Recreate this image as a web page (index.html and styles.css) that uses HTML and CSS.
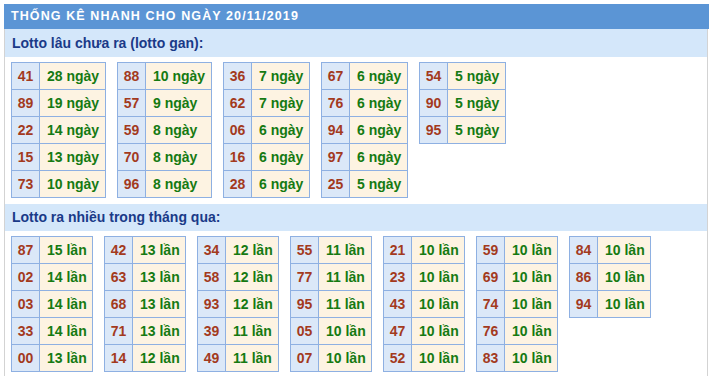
FILE: index.html
```html
<!DOCTYPE html>
<html>
<head>
<meta charset="utf-8">
<link rel="stylesheet" href="styles.css">
</head>
<body>
<div class="box">
  <div class="title">THỐNG KÊ NHANH CHO NGÀY 20/11/2019</div>
  <div class="body">
    <div class="sub first">Lotto lâu chưa ra (lotto gan):</div>
    <div class="tables">
      <table class="g2"><tr><td class="n">41</td><td class="t">28 ngày</td></tr><tr><td class="n">89</td><td class="t">19 ngày</td></tr><tr><td class="n">22</td><td class="t">14 ngày</td></tr><tr><td class="n">15</td><td class="t">13 ngày</td></tr><tr><td class="n">73</td><td class="t">10 ngày</td></tr></table>
      <table class="g2"><tr><td class="n">88</td><td class="t">10 ngày</td></tr><tr><td class="n">57</td><td class="t">9 ngày</td></tr><tr><td class="n">59</td><td class="t">8 ngày</td></tr><tr><td class="n">70</td><td class="t">8 ngày</td></tr><tr><td class="n">96</td><td class="t">8 ngày</td></tr></table>
      <table class="g1"><tr><td class="n">36</td><td class="t">7 ngày</td></tr><tr><td class="n">62</td><td class="t">7 ngày</td></tr><tr><td class="n">06</td><td class="t">6 ngày</td></tr><tr><td class="n">16</td><td class="t">6 ngày</td></tr><tr><td class="n">28</td><td class="t">6 ngày</td></tr></table>
      <table class="g1"><tr><td class="n">67</td><td class="t">6 ngày</td></tr><tr><td class="n">76</td><td class="t">6 ngày</td></tr><tr><td class="n">94</td><td class="t">6 ngày</td></tr><tr><td class="n">97</td><td class="t">6 ngày</td></tr><tr><td class="n">25</td><td class="t">5 ngày</td></tr></table>
      <table class="g1"><tr><td class="n">54</td><td class="t">5 ngày</td></tr><tr><td class="n">90</td><td class="t">5 ngày</td></tr><tr><td class="n">95</td><td class="t">5 ngày</td></tr></table>
    </div>
    <div class="sub">Lotto ra nhiều trong tháng qua:</div>
    <div class="tables">
      <table class="l"><tr><td class="n">87</td><td class="t">15 lần</td></tr><tr><td class="n">02</td><td class="t">14 lần</td></tr><tr><td class="n">03</td><td class="t">14 lần</td></tr><tr><td class="n">33</td><td class="t">14 lần</td></tr><tr><td class="n">00</td><td class="t">13 lần</td></tr></table>
      <table class="l"><tr><td class="n">42</td><td class="t">13 lần</td></tr><tr><td class="n">63</td><td class="t">13 lần</td></tr><tr><td class="n">68</td><td class="t">13 lần</td></tr><tr><td class="n">71</td><td class="t">13 lần</td></tr><tr><td class="n">14</td><td class="t">12 lần</td></tr></table>
      <table class="l"><tr><td class="n">34</td><td class="t">12 lần</td></tr><tr><td class="n">58</td><td class="t">12 lần</td></tr><tr><td class="n">93</td><td class="t">12 lần</td></tr><tr><td class="n">39</td><td class="t">11 lần</td></tr><tr><td class="n">49</td><td class="t">11 lần</td></tr></table>
      <table class="l"><tr><td class="n">55</td><td class="t">11 lần</td></tr><tr><td class="n">77</td><td class="t">11 lần</td></tr><tr><td class="n">95</td><td class="t">11 lần</td></tr><tr><td class="n">05</td><td class="t">10 lần</td></tr><tr><td class="n">07</td><td class="t">10 lần</td></tr></table>
      <table class="l"><tr><td class="n">21</td><td class="t">10 lần</td></tr><tr><td class="n">23</td><td class="t">10 lần</td></tr><tr><td class="n">43</td><td class="t">10 lần</td></tr><tr><td class="n">47</td><td class="t">10 lần</td></tr><tr><td class="n">52</td><td class="t">10 lần</td></tr></table>
      <table class="l"><tr><td class="n">59</td><td class="t">10 lần</td></tr><tr><td class="n">69</td><td class="t">10 lần</td></tr><tr><td class="n">74</td><td class="t">10 lần</td></tr><tr><td class="n">76</td><td class="t">10 lần</td></tr><tr><td class="n">83</td><td class="t">10 lần</td></tr></table>
      <table class="l"><tr><td class="n">84</td><td class="t">10 lần</td></tr><tr><td class="n">86</td><td class="t">10 lần</td></tr><tr><td class="n">94</td><td class="t">10 lần</td></tr></table>
    </div>
  </div>
</div>
</body>
</html>
```
FILE: styles.css
```css
html, body {
  margin: 0;
  padding: 0;
  background: #ffffff;
}
body {
  font-family: "Liberation Sans", Arial, sans-serif;
  font-weight: bold;
}
.box {
  margin: 4px 0 0 4px;
}
.title {
  background: #5b95d5;
  color: #ffffff;
  font-size: 12.5px;
  letter-spacing: 1.1px;
  height: 25px;
  line-height: 25px;
  padding-left: 7px;
  width: 698px;
}
.body {
  width: 702px;
  border-left: 1px solid #d3d3d3;
  border-right: 1px solid #d3d3d3;
}
.sub {
  background: #d4e7fa;
  color: #1a3a88;
  font-size: 14px;
  height: 27px;
  line-height: 27px;
  padding-left: 7px;
}
.sub.first {
  height: 28px;
  line-height: 28px;
}
.tables {
  display: flex;
  align-items: flex-start;
  gap: 11px;
  padding: 5px 0 6px 6px;
}
table {
  border-collapse: collapse;
  font-size: 14px;
  flex: none;
}
table.g2 {
  width: 95px;
}
table.g1 {
  width: 87px;
}
table.l {
  width: 82px;
}
td {
  border: 1px solid #8eb0e2;
  height: 26px;
  padding: 0;
  line-height: 16px;
  white-space: nowrap;
}
td.n {
  background: #dbe8f8;
  color: #a33a1d;
  width: 27px;
  text-align: center;
}
td.t {
  background: #fdf3e2;
  color: #157a12;
  padding: 0 0 0 7px;
}
```
